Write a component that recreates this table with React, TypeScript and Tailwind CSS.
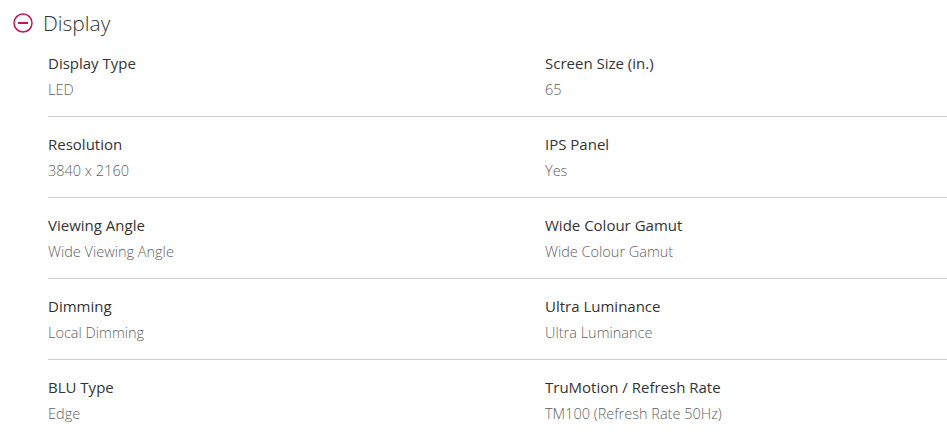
import React from "react";

const specs = [
  [
    { label: "Display Type", value: "LED" },
    { label: "Screen Size (in.)", value: "65" },
  ],
  [
    { label: "Resolution", value: "3840 x 2160" },
    { label: "IPS Panel", value: "Yes" },
  ],
  [
    { label: "Viewing Angle", value: "Wide Viewing Angle" },
    { label: "Wide Colour Gamut", value: "Wide Colour Gamut" },
  ],
  [
    { label: "Dimming", value: "Local Dimming" },
    { label: "Ultra Luminance", value: "Ultra Luminance" },
  ],
  [
    { label: "BLU Type", value: "Edge" },
    { label: "TruMotion / Refresh Rate", value: "TM100 (Refresh Rate 50Hz)" },
  ],
];

export default function App() {
  return (
    <main
      className="bg-white w-[947px] h-[440px] overflow-hidden"
      style={{ fontFamily: '"Open Sans", sans-serif' }}
    >
      {/* Section header */}
      <div className="flex items-center h-[24px] mt-[11px] pl-[13px] gap-[10px]">
        <svg width="20" height="20" viewBox="0 0 20 20" fill="none">
          <circle cx="10" cy="10" r="9" stroke="#c5174f" strokeWidth="1.5" />
          <line x1="5" y1="10" x2="15" y2="10" stroke="#c5174f" strokeWidth="2" />
        </svg>
        <h2 className="text-[21px] leading-[24px] font-light text-[#333]">Display</h2>
      </div>

      {/* Spec rows */}
      <div className="pl-[48px] mt-[1px]">
        {specs.map((row, i) => (
          <div
            key={i}
            className={`grid grid-cols-[497px_1fr] pt-[17px] pb-[16px] ${
              i < specs.length - 1 ? "border-b border-[#d0d0d0]" : ""
            }`}
          >
            {row.map((item) => (
              <div key={item.label} className="flex flex-col gap-[7px]">
                <span className="text-[15px] leading-[20px] text-[#333]">{item.label}</span>
                <span className="text-[14.5px] leading-[20px] font-light text-[#5f5f5f]">{item.value}</span>
              </div>
            ))}
          </div>
        ))}
      </div>
    </main>
  );
}
